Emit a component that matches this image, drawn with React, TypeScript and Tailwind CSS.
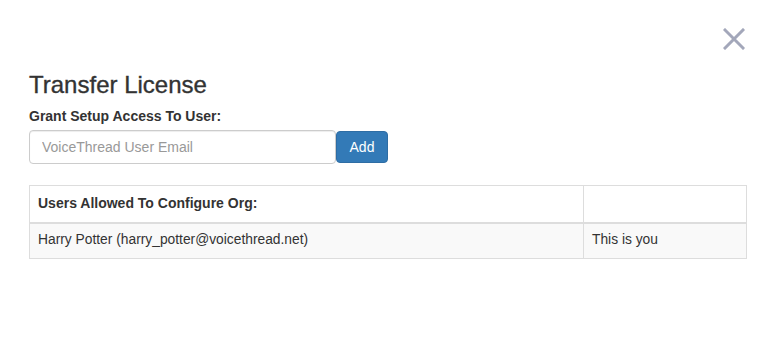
import React from "react";

export default function App() {
  return (
    <div className="w-[780px] h-[345px] bg-white text-[#333] font-['Liberation_Sans',Arial,sans-serif] relative">
      {/* Close */}
      <button className="absolute left-[721px] top-[27px] w-[25px] h-[24px] flex items-center justify-center">
        <svg width="22" height="22" viewBox="0 0 22 22">
          <path d="M2 2 L20 20 M20 2 L2 20" stroke="#a3a7ba" strokeWidth="3" strokeLinecap="square" />
        </svg>
      </button>

      <div className="pl-[29px] pr-[33px] pt-[70px]">
        <h2 className="text-[24px] leading-[30px] font-normal [-webkit-text-stroke:0.35px_#333]">Transfer License</h2>
        <div className="mt-[8px] text-[14px] leading-[16px] font-bold">Grant Setup Access To User:</div>

        <div className="mt-[6px] flex items-start">
          <input
            type="text"
            placeholder="VoiceThread User Email"
            className="w-[307px] h-[34px] px-3 text-[14px] border border-[#ccc] rounded-[4px] outline-none placeholder:text-[#999] shadow-[inset_0_1px_1px_rgba(0,0,0,0.075)]"
          />
          <button className="mt-[1px] w-[52px] h-[32px] bg-[#337ab7] border border-[#2e6da4] rounded-[4px] text-white text-[14px]">
            Add
          </button>
        </div>

        <table className="mt-[21px] w-[718px] border-collapse border border-[#ddd] text-[13.8px]">
          <thead>
            <tr>
              <th className="h-[37px] px-2 text-left text-[14px] font-bold border border-[#ddd] border-b-2">
                Users Allowed To Configure Org:
              </th>
              <th className="w-[163px] border border-[#ddd] border-b-2"></th>
            </tr>
          </thead>
          <tbody>
            <tr className="bg-[#f9f9f9]">
              <td className="h-[36px] px-2 border border-[#ddd]">Harry Potter (harry_potter@voicethread.net)</td>
              <td className="px-2 border border-[#ddd]">This is you</td>
            </tr>
          </tbody>
        </table>
      </div>
    </div>
  );
}
